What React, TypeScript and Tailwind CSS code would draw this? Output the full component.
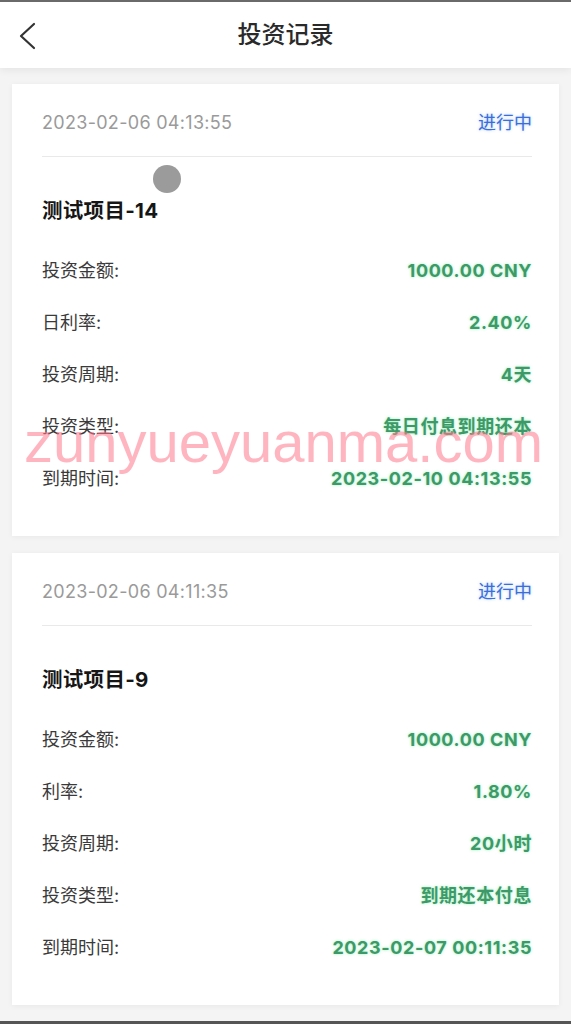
import React from "react";

type Row = { label: string; value: string };
type Rec = { date: string; status: string; title: string; rows: Row[] };

const records: Rec[] = [
  {
    date: "2023-02-06 04:13:55",
    status: "进行中",
    title: "测试项目-14",
    rows: [
      { label: "投资金额:", value: "1000.00 CNY" },
      { label: "日利率:", value: "2.40%" },
      { label: "投资周期:", value: "4天" },
      { label: "投资类型:", value: "每日付息到期还本" },
      { label: "到期时间:", value: "2023-02-10 04:13:55" },
    ],
  },
  {
    date: "2023-02-06 04:11:35",
    status: "进行中",
    title: "测试项目-9",
    rows: [
      { label: "投资金额:", value: "1000.00 CNY" },
      { label: "利率:", value: "1.80%" },
      { label: "投资周期:", value: "20小时" },
      { label: "投资类型:", value: "到期还本付息" },
      { label: "到期时间:", value: "2023-02-07 00:11:35" },
    ],
  },
];

function Card({ r }: { r: Rec }) {
  return (
    <div className="bg-white pl-[30px] pr-[27px] pb-[44px] shadow-[0_1px_6px_rgba(0,0,0,0.05)]">
      <div className="flex items-center justify-between pt-[26px] pb-[20px] leading-[26px]">
        <span className="text-[18px] tracking-[0.3px] text-[#9a9a9a]">{r.date}</span>
        <span className="text-[18px] text-[#3a6fd8] [text-shadow:0_0_3px_rgba(80,140,255,0.45)]">
          {r.status}
        </span>
      </div>
      <div className="h-px bg-[#e9e9e9]" />
      <div className="mt-[40px] text-[20.5px] font-bold leading-[28px] tracking-[0.3px] text-[#161616]">
        {r.title}
      </div>
      <div className="mt-[33px] flex flex-col gap-[26px]">
        {r.rows.map((row, i) => (
          <div key={i} className="flex items-center justify-between leading-[26px]">
            <span className="text-[18px] text-[#3a3a3a]">{row.label}</span>
            <span className="text-[18px] font-bold tracking-[0.6px] text-[#3d9a68] [text-shadow:0_0_3px_rgba(74,222,128,0.55)]">
              {row.value}
            </span>
          </div>
        ))}
      </div>
    </div>
  );
}

export default function App() {
  return (
    <div
      className="relative h-[1024px] overflow-hidden border-t-2 border-b-[3px] border-t-[#6a6a6a] border-b-[#555] bg-[#f4f4f4]"
      style={{ fontFamily: 'Inter, "Noto Sans CJK SC", sans-serif' }}
    >
      <div className="relative z-10 flex h-[66px] items-center justify-center bg-white shadow-[0_2px_8px_rgba(0,0,0,0.07)]">
        <svg
          className="absolute left-[17px] top-[20px]"
          width="22"
          height="28"
          viewBox="0 0 22 28"
          fill="none"
        >
          <path d="M17 2 L4 14 L17 26" stroke="#333" strokeWidth="2.2" strokeLinecap="round" strokeLinejoin="round" />
        </svg>
        <span className="text-[24px] font-medium text-[#2a2a2a]">投资记录</span>
      </div>
      <div className="flex flex-col gap-[17px] px-3 pt-[16px]">
        {records.map((r, i) => (
          <Card key={i} r={r} />
        ))}
      </div>
      <div className="absolute left-[153px] top-[163px] h-[28px] w-[28px] rounded-full bg-[#9b9b9b]" />
      <div
        className="pointer-events-none absolute left-[24px] top-[411px] text-[58px] leading-none text-[rgba(255,120,140,0.55)]"
        style={{ fontFamily: '"Liberation Sans", Arial, sans-serif' }}
      >
        zunyueyuanma.com
      </div>
    </div>
  );
}
